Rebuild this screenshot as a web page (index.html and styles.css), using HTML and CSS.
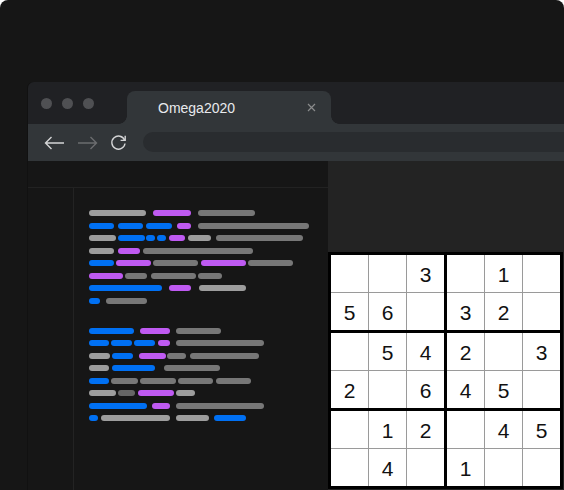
FILE: index.html
```html
<!DOCTYPE html>
<html>
<head>
<meta charset="utf-8">
<link rel="stylesheet" href="styles.css">
</head>
<body>
<div class="frame">
  <div class="window">
    <div class="tabstrip">
      <div class="dots"><span class="dot"></span><span class="dot"></span><span class="dot"></span></div>
      <div class="tab">
        <span class="tab-title">Omega2020</span>
        <svg class="tab-close" width="9" height="9" viewBox="0 0 9 9"><path d="M1 1L8 8M8 1L1 8" stroke="#8a8b8c" stroke-width="1.2" fill="none"/></svg>
      </div>
    </div>
    <div class="toolbar">
      <svg class="nav" width="21" height="14" viewBox="0 0 21 14"><path d="M20 7H1.5M7.5 1L1.5 7L7.5 13" stroke="#d4d5d6" stroke-width="1.4" fill="none"/></svg>
      <svg class="nav fwd" width="21" height="14" viewBox="0 0 21 14"><path d="M1 7H19.5M13.5 1L19.5 7L13.5 13" stroke="#6b6d6f" stroke-width="1.4" fill="none"/></svg>
      <svg class="nav reload" width="17" height="17" viewBox="0 0 17 17"><path d="M14.6 6.2A6.6 6.6 0 1 0 15 9.5" stroke="#d4d5d6" stroke-width="1.4" fill="none"/><path d="M15.2 1.8V6.4H10.6" stroke="#d4d5d6" stroke-width="1.4" fill="none"/></svg>
      <div class="address"></div>
    </div>
    <div class="content">
      <div class="editor">
        <div class="editor-head"></div>
        <div class="editor-body">
          <div class="gutter"></div>
          <div class="code">
            <div class="block">
              <div class="row"><span class="p l" style="width:57px"></span><span class="p v" style="width:38px;margin-left:7px"></span><span class="p g" style="width:57px;margin-left:7px"></span></div>
              <div class="row"><span class="p b" style="width:25px"></span><span class="p b" style="width:25px;margin-left:4px"></span><span class="p b" style="width:26px;margin-left:3px"></span><span class="p v" style="width:14px;margin-left:5px"></span><span class="p g" style="width:111px;margin-left:7px"></span></div>
              <div class="row"><span class="p l" style="width:27px"></span><span class="p b" style="width:27px;margin-left:2px"></span><span class="p b" style="width:9px;margin-left:1px"></span><span class="p b" style="width:9px;margin-left:2px"></span><span class="p v" style="width:16px;margin-left:3px"></span><span class="p l" style="width:23px;margin-left:3px"></span><span class="p g" style="width:87px;margin-left:5px"></span></div>
              <div class="row"><span class="p l" style="width:25px"></span><span class="p v" style="width:22px;margin-left:4px"></span><span class="p g" style="width:110px;margin-left:3px"></span></div>
              <div class="row"><span class="p b" style="width:25px"></span><span class="p v" style="width:35px;margin-left:2px"></span><span class="p g" style="width:45px;margin-left:2px"></span><span class="p v" style="width:45px;margin-left:3px"></span><span class="p g" style="width:45px;margin-left:2px"></span></div>
              <div class="row"><span class="p v" style="width:34px"></span><span class="p g" style="width:22px;margin-left:2px"></span><span class="p g" style="width:45px;margin-left:4px"></span><span class="p g" style="width:24px;margin-left:2px"></span></div>
              <div class="row"><span class="p b" style="width:73px"></span><span class="p v" style="width:22px;margin-left:7px"></span><span class="p l" style="width:47px;margin-left:8px"></span></div>
              <div class="row"><span class="p b" style="width:11px"></span><span class="p g" style="width:41px;margin-left:6px"></span></div>
            </div>
            <div class="block">
              <div class="row"><span class="p b" style="width:45px"></span><span class="p v" style="width:30px;margin-left:6px"></span><span class="p g" style="width:45px;margin-left:6px"></span></div>
              <div class="row"><span class="p b" style="width:20px"></span><span class="p b" style="width:21px;margin-left:2px"></span><span class="p b" style="width:21px;margin-left:2px"></span><span class="p v" style="width:12px;margin-left:3px"></span><span class="p g" style="width:88px;margin-left:6px"></span></div>
              <div class="row"><span class="p l" style="width:21px"></span><span class="p b" style="width:21px;margin-left:2px"></span><span class="p v" style="width:27px;margin-left:6px"></span><span class="p g" style="width:19px;margin-left:1px"></span><span class="p g" style="width:69px;margin-left:4px"></span></div>
              <div class="row"><span class="p l" style="width:20px"></span><span class="p b" style="width:43px;margin-left:3px"></span><span class="p g" style="width:56px;margin-left:9px"></span></div>
              <div class="row"><span class="p b" style="width:20px"></span><span class="p g" style="width:27px;margin-left:2px"></span><span class="p g" style="width:36px;margin-left:2px"></span><span class="p g" style="width:35px;margin-left:2px"></span><span class="p g" style="width:35px;margin-left:3px"></span></div>
              <div class="row"><span class="p l" style="width:27px"></span><span class="p d" style="width:17px;margin-left:2px"></span><span class="p v" style="width:36px;margin-left:3px"></span><span class="p l" style="width:19px;margin-left:2px"></span></div>
              <div class="row"><span class="p b" style="width:58px"></span><span class="p v" style="width:18px;margin-left:5px"></span><span class="p g" style="width:88px;margin-left:6px"></span></div>
              <div class="row"><span class="p b" style="width:9px"></span><span class="p l" style="width:69px;margin-left:3px"></span><span class="p l" style="width:33px;margin-left:6px"></span><span class="p b" style="width:32px;margin-left:5px"></span></div>
            </div>
          </div>
        </div>
      </div>
      <div class="viewer">
        <div class="sudoku">
          <div class="box"><div class="cell"></div><div class="cell"></div><div class="cell">3</div><div class="cell">5</div><div class="cell">6</div><div class="cell"></div></div>
          <div class="box"><div class="cell"></div><div class="cell">1</div><div class="cell"></div><div class="cell">3</div><div class="cell">2</div><div class="cell"></div></div>
          <div class="box"><div class="cell"></div><div class="cell">5</div><div class="cell">4</div><div class="cell">2</div><div class="cell"></div><div class="cell">6</div></div>
          <div class="box"><div class="cell">2</div><div class="cell"></div><div class="cell">3</div><div class="cell">4</div><div class="cell">5</div><div class="cell"></div></div>
          <div class="box"><div class="cell"></div><div class="cell">1</div><div class="cell">2</div><div class="cell"></div><div class="cell">4</div><div class="cell"></div></div>
          <div class="box"><div class="cell"></div><div class="cell">4</div><div class="cell">5</div><div class="cell">1</div><div class="cell"></div><div class="cell"></div></div>
        </div>
      </div>
    </div>
  </div>
</div>
</body>
</html>
```
FILE: styles.css
```css
* { box-sizing: border-box; margin: 0; padding: 0; }
html, body { width: 564px; height: 490px; overflow: hidden; background: #ffffff; }
body { font-family: "Liberation Sans", Arial, sans-serif; }

.frame {
  width: 564px;
  height: 490px;
  background: #161616;
  border-radius: 8px 8px 0 0;
  overflow: hidden;
  padding: 82px 0 0 28px;
}

.window {
  height: 408px;
  display: flex;
  flex-direction: column;
  border-top-left-radius: 6px;
  background: #161616;
  box-shadow: -1px 0 0 #111111;
}

.tabstrip {
  height: 42px;
  flex: none;
  background: #202124;
  border-top-left-radius: 6px;
  display: flex;
  align-items: flex-end;
}

.dots {
  width: 99px;
  align-self: flex-start;
  margin-top: 16px;
  padding-left: 13px;
  display: flex;
  gap: 10px;
}
.dot { width: 11px; height: 11px; border-radius: 50%; background: #4f5053; }

.tab {
  position: relative;
  width: 204px;
  height: 33px;
  background: #323639;
  border-radius: 8px 8px 0 0;
  display: flex;
  align-items: center;
  padding-left: 31px;
}
.tab::before, .tab::after {
  content: "";
  position: absolute;
  bottom: 0;
  width: 8px;
  height: 8px;
}
.tab::before { left: -8px; background: radial-gradient(circle at 0 0, transparent 7.5px, #323639 8px); }
.tab::after { right: -8px; background: radial-gradient(circle at 100% 0, transparent 7.5px, #323639 8px); }
.tab-title { color: #e8eaed; font-size: 14px; }
.tab-close { margin-left: auto; margin-right: 15px; }

.toolbar {
  height: 37px;
  flex: none;
  background: #323639;
  display: flex;
  align-items: center;
  padding-left: 16px;
}
.nav { flex: none; display: block; }
.fwd { margin-left: 12px; }
.reload { margin-left: 12px; }
.address {
  flex: 1;
  height: 20px;
  margin: -2px -20px 0 16px;
  border-radius: 10px;
  background: #292c2f;
}

.content { flex: 1; display: flex; }

.editor { width: 300px; display: flex; flex-direction: column; background: #161616; }
.editor-head { height: 27px; border-bottom: 1px solid #222222; flex: none; }
.editor-body { flex: 1; display: flex; }
.gutter { width: 46px; border-right: 1px solid #232323; }
.code { padding: 22px 0 0 15px; display: flex; flex-direction: column; gap: 24px; }
.block { display: flex; flex-direction: column; gap: 6.5px; }
.row { display: flex; height: 6px; }
.p { display: block; height: 6px; border-radius: 3px; flex: none; }
.b { background: #0070f3; }
.v { background: #bf5af2; }
.l { background: #9d9d9d; }
.g { background: #777777; }
.d { background: #666666; }

.viewer { flex: 1; background: #232323; padding-top: 91px; }
.sudoku {
  width: max-content;
  display: grid;
  grid-template-columns: repeat(2, auto);
  gap: 3px;
  background: #000;
  border: 3px solid #000;
}
.box {
  display: grid;
  grid-template-columns: repeat(3, 37px);
  grid-auto-rows: 37px;
  gap: 1px;
  background: #9a9a9a;
}
.cell {
  background: #fff;
  display: flex;
  align-items: center;
  justify-content: center;
  padding-top: 3px;
  font-size: 21px;
  color: #111;
}
```
